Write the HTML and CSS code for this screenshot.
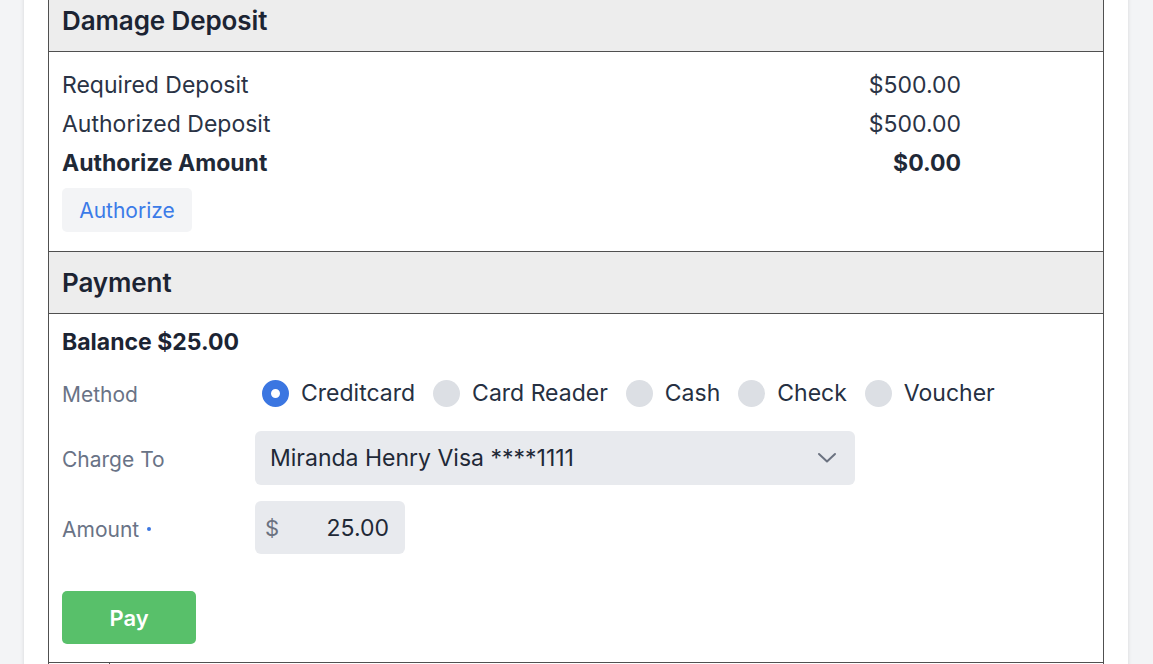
FILE: index.html
```html
<!DOCTYPE html>
<html lang="en">
<head>
<meta charset="utf-8">
<title>Deposit and Payment</title>
<link rel="stylesheet" href="styles.css">
</head>
<body>
<div class="card">
  <div class="table">
    <div class="sec-head">Damage Deposit</div>
    <div class="deposit">
      <div class="drow"><span>Required Deposit</span><span>$500.00</span></div>
      <div class="drow"><span>Authorized Deposit</span><span>$500.00</span></div>
      <div class="drow strong"><span>Authorize Amount</span><span>$0.00</span></div>
      <button class="btn-auth">Authorize</button>
    </div>
    <div class="sec-head">Payment</div>
    <div class="payment">
      <div class="balance">Balance $25.00</div>
      <div class="frow method-row">
        <div class="flabel">Method</div>
        <div class="radios">
          <label class="radio"><span class="dot checked"></span>Creditcard</label>
          <label class="radio"><span class="dot"></span>Card Reader</label>
          <label class="radio"><span class="dot"></span>Cash</label>
          <label class="radio"><span class="dot"></span>Check</label>
          <label class="radio"><span class="dot"></span>Voucher</label>
        </div>
      </div>
      <div class="frow charge-row">
        <div class="flabel">Charge To</div>
        <div class="select">
          <span>Miranda Henry Visa ****1111</span>
          <svg class="chev" width="20" height="12" viewBox="0 0 20 12"><path d="M2 2 L10 9.5 L18 2" fill="none" stroke="#6b7280" stroke-width="2" stroke-linecap="round" stroke-linejoin="round"/></svg>
        </div>
      </div>
      <div class="frow amount-row">
        <div class="flabel">Amount <span class="req"></span></div>
        <div class="amount"><span class="cur">$</span><span class="val">25.00</span></div>
      </div>
      <button class="btn-pay">Pay</button>
    </div>
    <div class="next-row"><div class="next-cell"></div><div class="next-cell2"></div></div>
  </div>
</div>
</body>
</html>
```

FILE: styles.css
```css
html, body {
  margin: 0;
  padding: 0;
}
body {
  background: #f3f4f6;
  font-family: Inter, "Noto Sans", "Liberation Sans", sans-serif;
  color: #1f2a3c;
  overflow: hidden;
  height: 664px;
}
.card {
  margin-left: 24px;
  width: 1104px;
  background: #fff;
  box-shadow: 0 0 4px rgba(0,0,0,0.12);
  padding: 0 24px;
  box-sizing: border-box;
  margin-top: -10px;
  height: 700px;
}
.table {
  border-left: 1.5px solid #505050;
  border-right: 1.5px solid #505050;
}
.sec-head {
  background: #ededed;
  height: 61px;
  display: flex;
  align-items: center;
  padding-left: 13px;
  font-size: 26px;
  font-weight: 600;
  color: #1c2433;
  border-bottom: 1.5px solid #505050;
  letter-spacing: -0.1px;
}
.deposit {
  padding: 13px 0 19px 13px;
  border-bottom: 1.5px solid #505050;
}
.drow {
  display: flex;
  justify-content: space-between;
  width: 899px;
  height: 39px;
  align-items: center;
  font-size: 23px;
  color: #2a3345;
}
.drow.strong {
  font-weight: 700;
  color: #1f2937;
}
.btn-auth {
  margin-top: 6px;
  width: 130px;
  height: 44px;
  border: none;
  border-radius: 5px;
  background: #f3f4f6;
  color: #3b7be8;
  font-family: inherit;
  font-size: 21px;
  padding: 0;
}
.payment {
  padding: 13px 0 18px 13px;
  border-bottom: 1.5px solid #505050;
}
.balance {
  font-size: 23px;
  font-weight: 700;
  height: 30px;
  line-height: 30px;
  color: #1c2433;
}
.frow {
  display: flex;
  align-items: center;
}
.flabel {
  width: 193px;
  font-size: 21px;
  color: #697386;
  padding-top: 3px;
  display: flex;
  align-items: center;
}
.method-row {
  height: 40px;
  margin-top: 16px;
}
.radios {
  display: flex;
  align-items: center;
  gap: 18px;
  margin-left: 7px;
}
.radio {
  display: flex;
  align-items: center;
  gap: 12px;
  font-size: 23px;
  color: #263042;
}
.dot {
  width: 27px;
  height: 27px;
  border-radius: 50%;
  background: #dcdfe4;
  box-sizing: border-box;
}
.dot.checked {
  background: #fff;
  border: 9px solid #3b76e1;
}
.charge-row {
  margin-top: 18px;
}
.select {
  width: 600px;
  height: 54px;
  background: #e8eaee;
  border-radius: 6px;
  display: flex;
  align-items: center;
  justify-content: space-between;
  padding: 0 18px 0 15px;
  box-sizing: border-box;
  font-size: 23px;
  color: #1f2937;
}
.amount-row {
  margin-top: 16px;
}
.req {
  display: inline-block;
  width: 4px;
  height: 4px;
  border-radius: 50%;
  background: #3b76e1;
  margin-left: 8px;
}
.amount {
  width: 150px;
  height: 53px;
  background: #e8eaee;
  border-radius: 6px;
  display: flex;
  align-items: center;
  justify-content: space-between;
  padding: 0 16px 0 10px;
  box-sizing: border-box;
}
.cur {
  font-size: 22px;
  color: #6b7280;
}
.val {
  font-size: 23px;
  color: #1f2937;
}
.btn-pay {
  margin-top: 37px;
  width: 134px;
  height: 53px;
  border: none;
  border-radius: 5px;
  background: #58c06a;
  color: #fff;
  font-family: inherit;
  font-size: 22px;
  font-weight: 600;
  padding: 0;
  display: block;
}
.next-row {
  display: flex;
  height: 40px;
}
.next-cell {
  width: 60px;
  border-right: 1.5px solid #505050;
}
```
